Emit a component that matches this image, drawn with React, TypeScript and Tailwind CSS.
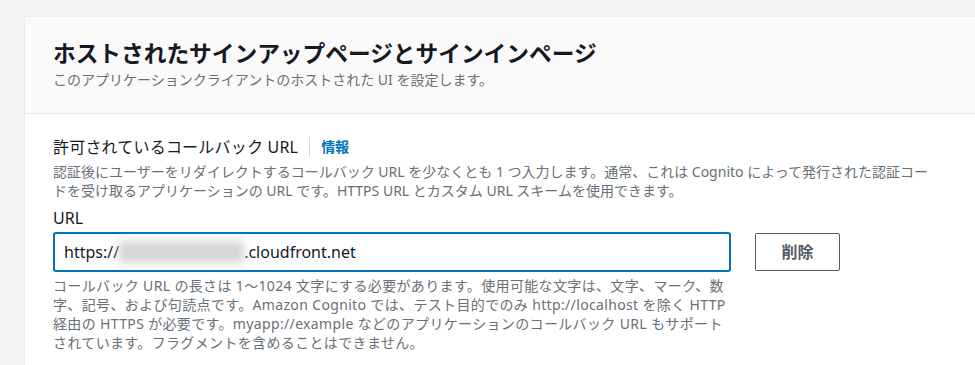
import React from "react";

const FF = "font-['Noto_Sans','Noto_Sans_CJK_JP',sans-serif]";

export default function App() {
  return (
    <div className={`w-[975px] h-[365px] overflow-hidden bg-[#f2f3f3] pt-4 pl-6 ${FF}`}>
      <div className="w-[1000px] h-[400px] bg-white border-l border-t border-[#eaeded]">
        <div className="bg-[#fafafa] border-b border-[#eaeded] pl-[28px] pt-[22px] pb-[23px]">
          <h1 className="text-[22.7px] leading-[30px] font-bold text-[#16191f] whitespace-nowrap">
            ホストされたサインアップページとサインインページ
          </h1>
          <p className="mt-[1px] text-[14px] leading-[20px] text-[#687078] whitespace-nowrap">
            このアプリケーションクライアントのホストされた UI を設定します。
          </p>
        </div>
        <div className="pl-[28px] pt-[22px]">
          <div className="flex items-center text-[16px] leading-[22px]">
            <span className="text-[#16191f] tracking-[0.2px]">許可されているコールバック URL</span>
            <span className="ml-[11px] mr-[11px] w-px h-[20px] bg-[#d5dbdb]" />
            <span className="text-[#0073bb] font-bold text-[14px]">情報</span>
          </div>
          <p className="mt-[4px] text-[14px] leading-[19px] text-[#687078] whitespace-nowrap">
            認証後にユーザーをリダイレクトするコールバック URL を少なくとも 1 つ入力します。通常、これは Cognito によって発行された認証コー
            <br />
            ドを受け取るアプリケーションの URL です。HTTPS URL とカスタム URL スキームを使用できます。
          </p>
          <div className="mt-[7px] text-[16px] leading-[22px] text-[#16191f]">URL</div>
          <div className="mt-[3px] flex items-start gap-6">
            <div className="w-[678px]">
              <div className="h-[40px] border-2 border-[#0073bb] rounded-[3px] flex items-center pl-[9px] text-[16px] text-[#16191f]">
                <span>https://</span>
                <span className="inline-block w-[125px] h-[22px] bg-[#d6d6d6] blur-[4px]" />
                <span>.cloudfront.net</span>
              </div>
              <p className="mt-[4px] text-[14px] leading-[19px] tracking-[0.35px] text-[#687078] whitespace-nowrap">
                コールバック URL の長さは 1～1024 文字にする必要があります。使用可能な文字は、文字、マーク、数
                <br />
                字、記号、および句読点です。Amazon Cognito では、テスト目的でのみ http://localhost を除く HTTP
                <br />
                経由の HTTPS が必要です。myapp://example などのアプリケーションのコールバック URL もサポート
                <br />
                されています。フラグメントを含めることはできません。
              </p>
            </div>
            <button className="mt-px w-[85px] h-[38px] border border-[#545b64] rounded-[2px] text-[#545b64] font-bold text-[16px] bg-white">
              削除
            </button>
          </div>
        </div>
      </div>
    </div>
  );
}
